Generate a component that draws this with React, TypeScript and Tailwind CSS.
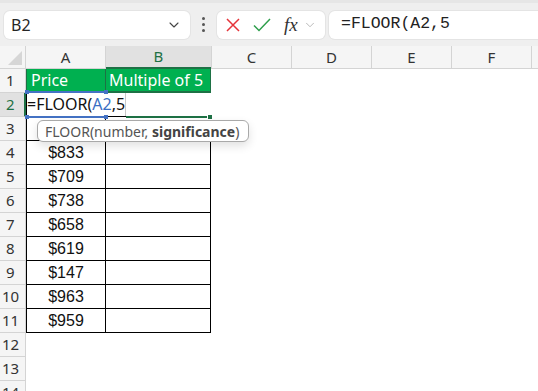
import { ChevronDown } from "lucide-react";

const values = ["", "$833", "$709", "$738", "$658", "$619", "$147", "$963", "$959"];
const cols = ["C", "D", "E", "F"];

const rowHead = (n: number) =>
  (n < 10 ? "pl-[6px]" : "pl-[2px]") +
  " w-[26px] border-r border-b border-[#d4d4d4] bg-[#f5f5f5] text-[15px] leading-[23px] text-[#333]";

export default function App() {
  return (
    <div className="relative w-[538px] h-[391px] overflow-hidden bg-white font-['Noto_Sans',sans-serif] text-[#262626]">
      {/* formula bar */}
      <div className="flex h-[46px] items-center border-t-[3px] border-[#e6e6e6] bg-[#efefef] pl-1">
        <div className="flex h-[28px] w-[186px] items-center justify-between rounded-md bg-white pl-[7px] pr-2 shadow-[0_0_0_1px_#e4e4e4]">
          <span className="text-[16px] leading-none">B2</span>
          <ChevronDown size={16} strokeWidth={1.6} className="text-[#444]" />
        </div>
        <div className="flex w-[27px] flex-col items-center gap-[3px]">
          <div className="h-[3px] w-[3px] rounded-full bg-[#555]" />
          <div className="h-[3px] w-[3px] rounded-full bg-[#555]" />
          <div className="h-[3px] w-[3px] rounded-full bg-[#555]" />
        </div>
        <div className="flex h-[28px] w-[108px] items-center rounded-md bg-white pl-[8px] shadow-[0_0_0_1px_#e4e4e4]">
          <svg width="16" height="16" viewBox="0 0 16 16" className="mr-[12px]">
            <path d="M2 2 L14 14 M14 2 L2 14" stroke="#e5343a" strokeWidth="1.5" fill="none" />
          </svg>
          <svg width="18" height="16" viewBox="0 0 18 16" className="mr-[13px]">
            <path d="M1 8.5 L6 13.5 L17 2" stroke="#2e9e4b" strokeWidth="1.5" fill="none" />
          </svg>
          <span className="font-['Liberation_Serif',serif] text-[19px] italic leading-none text-[#333]">fx</span>
          <ChevronDown size={14} strokeWidth={1.4} className="ml-[5px] text-[#aaa]" />
        </div>
        <div className="ml-1 flex h-[28px] flex-1 items-center rounded-l-md bg-white pl-[12px] shadow-[0_0_0_1px_#e4e4e4]">
          <span className="font-['Liberation_Mono',monospace] text-[16.5px] leading-none text-[#222]">=FLOOR(A2,5</span>
        </div>
      </div>

      {/* column headers */}
      <div className="flex h-[23px] bg-[#f5f5f5] text-[15px] text-[#333]">
        <div className="relative w-[26px] border-r border-b border-[#d4d4d4]">
          <svg width="14" height="14" viewBox="0 0 14 14" className="absolute right-[3px] bottom-[3px]">
            <polygon points="14,0 14,14 0,14" fill="#d6d6d6" />
          </svg>
        </div>
        <div className="flex w-[80px] items-center justify-center border-r border-b border-[#d4d4d4]">A</div>
        <div className="flex w-[105px] items-center justify-center border-b-2 border-[#1e7145] bg-[#e1e1e1] text-[#1e7145]">B</div>
        {cols.map((c) => (
          <div key={c} className="flex w-[80px] items-center justify-center border-l border-b border-[#d4d4d4]">
            {c}
          </div>
        ))}
        <div className="flex-1 border-l border-b border-[#d4d4d4]" />
      </div>

      {/* row 1 */}
      <div className="flex h-[24px]">
        <div className={rowHead(1)}>1</div>
        <div className="w-[80px] border-x border-b border-[#1e7145] bg-[#00b050] pl-[4px] text-[16px] leading-[22px] text-white">Price</div>
        <div className="w-[105px] border-r border-b-2 border-[#1e7145] bg-[#00b050] pl-[3px] text-[16px] leading-[22px] text-white">Multiple of 5</div>
      </div>

      {/* row 2 */}
      <div className="flex h-[24px]">
        <div className="w-[26px] border-r-2 border-b border-r-[#1e7145] border-b-[#d4d4d4] bg-[#e1e1e1] pl-[6px] text-[15px] leading-[23px] text-[#1e7145]">2</div>
        <div className="w-[80px] border-x border-b border-black" />
        <div className="w-[105px] border-b border-black" />
      </div>

      {values.map((v, i) => (
        <div key={i} className="flex h-[24px]">
          <div className={rowHead(i + 3)}>{i + 3}</div>
          <div className="w-[80px] border-x border-b border-black text-center font-['Liberation_Sans',sans-serif] text-[16px] leading-[23px] text-[#111]">{v}</div>
          <div className="w-[105px] border-r border-b border-black" />
        </div>
      ))}

      {[12, 13, 14].map((n) => (
        <div key={n} className="flex h-[24px]">
          <div className={rowHead(n)}>{n}</div>
        </div>
      ))}

      {/* in-cell editor */}
      <div className="absolute left-[27px] top-[93px] h-[23px] w-[99px] border-r border-[#c8c8c8] bg-white text-[16px] leading-[23px] text-[#111]">
        =FLOOR(<span className="text-[#3a6fc4]">A2</span>,5
      </div>
      {/* reference highlight A2 */}
      <div className="absolute left-[26px] top-[91px] h-[2px] w-[81px] bg-[#4472c4]" />
      <div className="absolute left-[26px] top-[116px] h-[2px] w-[81px] bg-[#4472c4]" />
      <div className="absolute left-[25px] top-[90px] h-[4px] w-[4px] bg-[#4472c4]" />
      <div className="absolute left-[104px] top-[90px] h-[4px] w-[4px] bg-[#4472c4]" />
      <div className="absolute left-[25px] top-[115px] h-[4px] w-[4px] bg-[#4472c4]" />
      <div className="absolute left-[104px] top-[115px] h-[4px] w-[4px] bg-[#4472c4]" />
      {/* active cell B2 */}
      <div className="absolute left-[126px] top-[116px] h-[2px] w-[82px] bg-[#1e7145]" />
      <div className="absolute left-[207px] top-[114px] h-[6px] w-[6px] border border-white bg-[#1e7145]" />

      {/* tooltip */}
      <div className="absolute left-[37px] top-[120px] flex h-[22px] w-[212px] items-center rounded-md border border-[#a9a9a9] bg-white pl-[7px] text-[14px] text-[#555] shadow-[0_4px_10px_rgba(0,0,0,0.12)]">
        FLOOR(number,&nbsp;<span className="font-bold text-[#444]">significance</span>)
      </div>
    </div>
  );
}
